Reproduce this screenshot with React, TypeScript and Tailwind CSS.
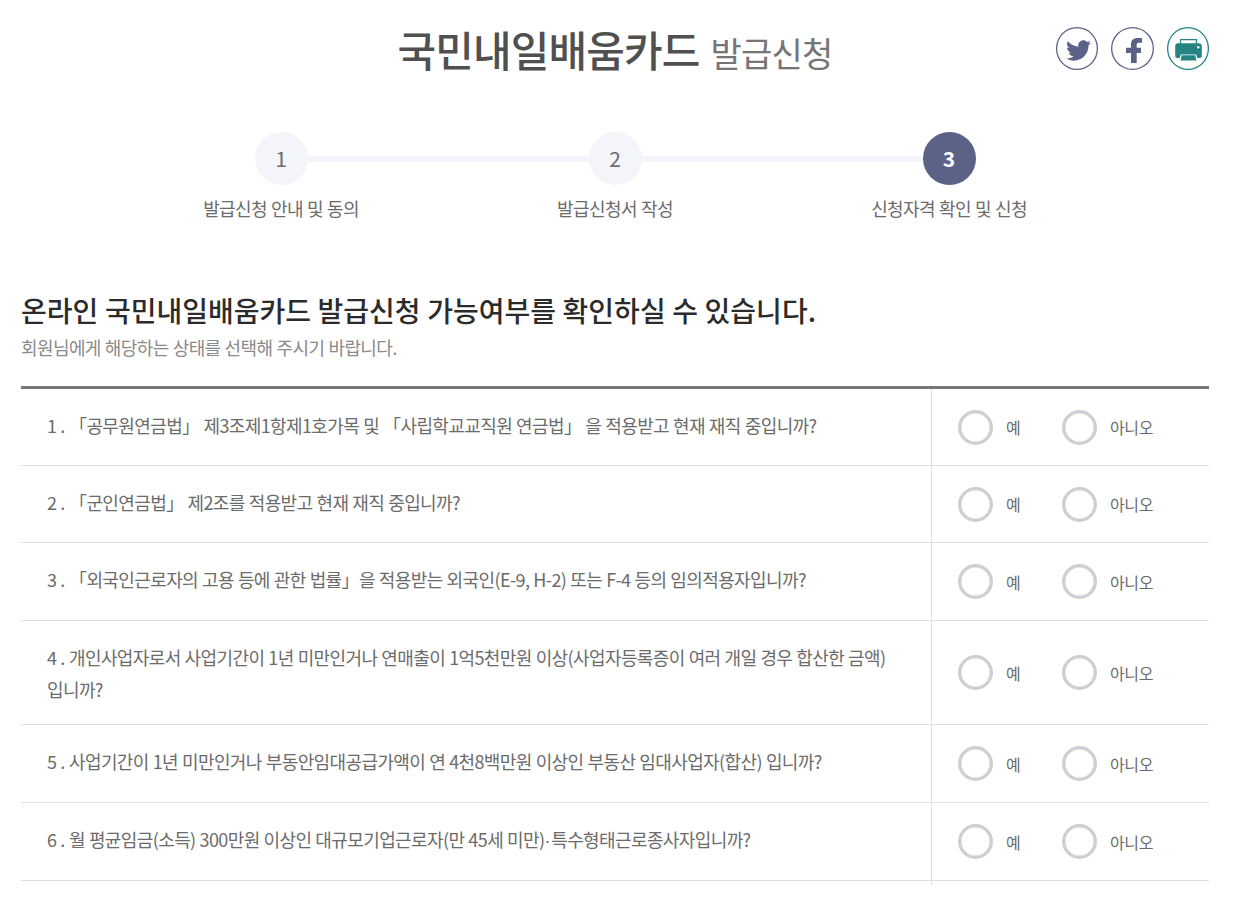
import clsx from 'clsx'
import { FaTwitter } from 'react-icons/fa'

const STEPS = [
  { number: 1, label: '발급신청 안내 및 동의' },
  { number: 2, label: '발급신청서 작성' },
  { number: 3, label: '신청자격 확인 및 신청' },
]

const CURRENT_STEP = 3

const QUESTIONS = [
  {
    rowClass: 'h-[77px]',
    lines: ['「공무원연금법」 제3조제1항제1호가목 및 「사립학교교직원 연금법」 을 적용받고 현재 재직 중입니까?'],
  },
  {
    rowClass: 'h-[77px]',
    lines: ['「군인연금법」 제2조를 적용받고 현재 재직 중입니까?'],
  },
  {
    rowClass: 'h-[78px]',
    lines: ['「외국인근로자의 고용 등에 관한 법률」을 적용받는 외국인(E-9, H-2) 또는 F-4 등의 임의적용자입니까?'],
  },
  {
    rowClass: 'h-[104px]',
    lines: [
      '개인사업자로서 사업기간이 1년 미만인거나 연매출이 1억5천만원 이상(사업자등록증이 여러 개일 경우 합산한 금액)',
      '입니까?',
    ],
  },
  {
    rowClass: 'h-[78px]',
    lines: ['사업기간이 1년 미만인거나 부동안임대공급가액이 연 4천8백만원 이상인 부동산 임대사업자(합산) 입니까?'],
  },
  {
    rowClass: 'h-[78px]',
    lines: [
      <>
        월 평균임금(소득) 300만원 이상인 대규모기업근로자(만 45세 미만)
        <span className="font-['Liberation_Sans',sans-serif] leading-none tracking-[-3.2px]">·</span>{' '}
        특수형태근로종사자입니까?
      </>,
    ],
  },
]

const FacebookIcon = () => (
  <svg width="16" height="25" viewBox="0 0 16 25" fill="currentColor">
    <path d="M16 0v4.700h-3.200c-1.600 0-2.100.7-2.100 2.200v2.900H15v5.200h-4.300v10H5V15H0V9.800h5V6.500C5 2.200 7.500 0 11.500 0H16Z" />
  </svg>
)

const PrintIcon = () => (
  <svg width="27" height="22" viewBox="0 0 27 22" fill="none">
    <path d="M5.500 4.500V.7h16v3.800" stroke="currentColor" strokeWidth="1.200" />
    <path
      fillRule="evenodd"
      d="M2.800 4.300h21.400A2.500 2.500 0 0 1 26.800 6.800v10.200a2 2 0 0 1-2 2h-2.600l-1-3.600H5.800l-1 3.600H2.200a2 2 0 0 1-2-2V6.800a2.500 2.500 0 0 1 2.600-2.500Zm20.500 2.600a1.300 1.300 0 1 0 0 2.600 1.300 1.300 0 0 0 0-2.600Z"
      fill="currentColor"
    />
    <path d="M6.800 16.200h13.400l1.300 5.300h-16l1.300-5.300Z" fill="currentColor" />
  </svg>
)

const Radio = ({ name, label }: { name: string; label: string }) => (
  <label className="flex cursor-pointer items-center gap-[13px]">
    <input
      type="radio"
      name={name}
      className="size-[35px] shrink-0 appearance-none rounded-full border-3 border-[#cfcfd3] bg-white shadow-[inset_0_0_0_0.5px_#cfcfd3] checked:border-[#5b6288]"
    />
    <span className="text-[16px] leading-6 tracking-[-0.4px]">{label}</span>
  </label>
)

export default function App() {
  return (
    <main className="h-[902px] w-[1237px] overflow-hidden bg-white pr-7 pl-[21px] font-['Noto_Sans_CJK_KR',sans-serif] text-[#6b6b6b]">
      <header className="grid h-[98px] grid-cols-[1fr_auto_1fr] items-center">
        <div />
        <h1 className="flex items-baseline gap-[11px] whitespace-nowrap">
          <span className="text-[42px] leading-[60px] font-medium tracking-[-0.9px] text-[#505050]">국민내일배움카드</span>
          <span className="text-[34px] tracking-[-0.8px] text-[#757575]">발급신청</span>
        </h1>
        <div className="flex justify-end gap-[13px] pb-px">
          <button className="flex size-[42.5px] items-center justify-center rounded-full pt-[3px] pl-[4px] text-[#5b6288] shadow-[inset_0_0_0_1.3px_#5b6288]">
            <FaTwitter size={25} />
          </button>
          <button className="flex size-[42.5px] items-center justify-center rounded-full pt-[4px] pl-[3px] text-[#5b6288] shadow-[inset_0_0_0_1.3px_#5b6288]">
            <FacebookIcon />
          </button>
          <button className="flex size-[42.5px] items-center justify-center rounded-full pt-[2px] pl-[2px] text-[#258481] shadow-[inset_0_0_0_1.3px_#258481]">
            <PrintIcon />
          </button>
        </div>
      </header>

      <ol className="mx-auto flex h-[187px] w-[1002px] pt-[34px]">
        {STEPS.map((step, i) => (
          <li key={step.number} className="flex flex-1 flex-col items-center">
            <div className="flex w-full items-center">
              <span className={clsx('h-[6px] flex-1', i > 0 && 'bg-[#f4f5fa]')} />
              <span
                className={clsx(
                  'flex size-[53px] items-center justify-center rounded-full pb-[2px] text-[21px] leading-[30px]',
                  step.number === CURRENT_STEP ? 'bg-[#5b6288] font-bold text-white' : 'bg-[#f4f5fa]',
                )}
              >
                {step.number}
              </span>
              <span className={clsx('h-[6px] flex-1', i < STEPS.length - 1 && 'bg-[#f4f5fa]')} />
            </div>
            <span className="mt-[9px] text-[18px] leading-7 tracking-[-0.6px] [word-spacing:0.6px]">{step.label}</span>
          </li>
        ))}
      </ol>

      <h2 className="mt-[5px] text-[28px] leading-10 font-medium [word-spacing:0.3px] text-[#2b2b2b]">
        온라인 국민내일배움카드 발급신청 가능여부를 확인하실 수 있습니다.
      </h2>
      <p className="mt-[3px] text-[18px] leading-7 tracking-[-0.6px] [word-spacing:0.6px] text-[#8a8a8a]">
        회원님에게 해당하는 상태를 선택해 주시기 바랍니다.
      </p>

      <section className="mt-[25px] border-t-[3px] border-[#777]">
        {QUESTIONS.map(({ rowClass, lines }, i) => (
          <div key={i} className={clsx('flex border-b border-[#e0e0e0]', rowClass)}>
            <div
              className={clsx(
                'flex w-[910px] flex-col justify-center pl-[26px] text-[18px] leading-8 tracking-[-0.61px] whitespace-nowrap [word-spacing:0.55px]',
                lines.length === 1 && 'pb-[5px]',
              )}
            >
              {lines.map((line, n) => (
                <p key={n}>
                  {n === 0 && <span className="inline-block w-[22px] tracking-[-0.6px]">{i + 1} .</span>}
                  {line}
                </p>
              ))}
            </div>
            <div className="flex flex-1 items-center border-l border-[#e0e0e0] pl-[26px]">
              <div className="w-[104px]">
                <Radio name={`q${i + 1}`} label="예" />
              </div>
              <Radio name={`q${i + 1}`} label="아니오" />
            </div>
          </div>
        ))}
        <div className="ml-[910px] h-1 border-l border-[#e0e0e0]" />
      </section>
    </main>
  )
}
